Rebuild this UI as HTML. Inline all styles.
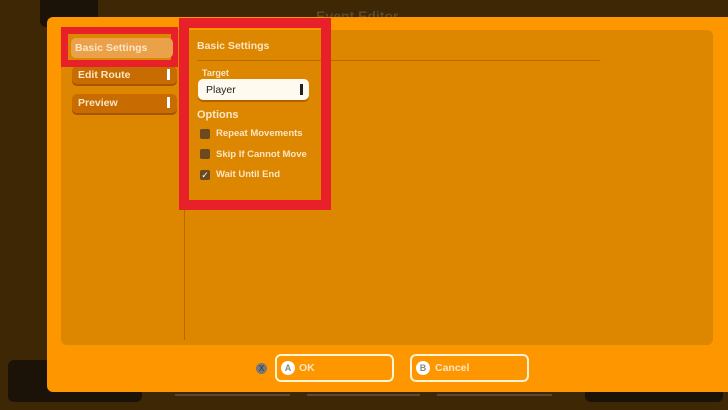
<!DOCTYPE html>
<html><head><style>
*{margin:0;padding:0;box-sizing:border-box}
body{width:728px;height:410px;overflow:hidden;background:#3d2704;font-family:"Liberation Sans",sans-serif;position:relative}
.a{position:absolute}
.t{color:#fbe6c4;font-weight:bold;font-size:10.5px}
.btn{border-radius:5px;background:#c86b00;box-shadow:0 2px 0 #a55400}
.cb{width:10px;height:10px;border-radius:2px;background:#6b4a1e}
.ob{border:2px solid #fff3d6;border-radius:6px;height:28px;width:119px}
.circ{width:14px;height:14px;border-radius:50%;background:#fff;color:#888;font-size:9px;font-weight:bold;text-align:center;line-height:14px}
</style></head><body>
<div class="a" style="left:40px;top:-5px;width:58px;height:32px;background:#1b1307;border-radius:6px"></div>
<div class="a" style="left:8px;top:360px;width:134px;height:42px;background:#1b1307;border-radius:6px"></div>
<div class="a" style="left:585px;top:370px;width:138px;height:32px;background:#1b1307;border-radius:6px"></div>
<div class="a" style="left:175px;top:394px;width:115px;height:2px;background:#5a4a35"></div>
<div class="a" style="left:307px;top:394px;width:113px;height:2px;background:#5a4a35"></div>
<div class="a" style="left:437px;top:394px;width:115px;height:2px;background:#5a4a35"></div>
<div class="a" style="left:316px;top:8px;color:#5a4a30;font-weight:bold;font-size:14px">Event Editor</div>
<div class="a" style="left:47px;top:17px;width:690px;height:375px;background:#fe9600;border-radius:6px"></div>
<div class="a" style="left:61px;top:30px;width:652px;height:315px;background:#dd8600;border-radius:6px"></div>
<div class="a" style="left:184px;top:200px;width:1px;height:140px;background:#b86a00"></div>
<div class="a" style="left:197px;top:60px;width:403px;height:1px;background:#b86a00"></div>
<div class="a btn" style="left:72px;top:66px;width:105px;height:18px"></div>
<div class="a t" style="left:78px;top:69px">Edit Route</div>
<div class="a" style="left:167px;top:69px;width:3px;height:11px;background:#fff"></div>
<div class="a btn" style="left:72px;top:94px;width:105px;height:19px"></div>
<div class="a t" style="left:78px;top:97px">Preview</div>
<div class="a" style="left:167px;top:97px;width:3px;height:11px;background:#fff"></div>
<div class="a" style="left:61px;top:27px;width:117px;height:40px;border:7px solid #e8202a"></div>
<div class="a" style="left:71px;top:38px;width:102px;height:20px;background:#eba14a;border-radius:5px"></div>
<div class="a t" style="left:75px;top:42px">Basic Settings</div>
<div class="a" style="left:179px;top:18px;width:152px;height:192px;border:10px solid #e8202a"></div>
<div class="a t" style="left:197px;top:40px">Basic Settings</div>
<div class="a t" style="left:202px;top:68px;font-size:9px">Target</div>
<div class="a" style="left:198px;top:79px;width:111px;height:21px;background:#fffaf0;border-radius:5px;box-shadow:0 2px 0 #b06000"></div>
<div class="a" style="left:206px;top:84px;font-size:10.5px;color:#222">Player</div>
<div class="a" style="left:300px;top:84px;width:3px;height:11px;background:#222"></div>
<div class="a t" style="left:197px;top:109px;font-size:11px">Options</div>
<div class="a cb" style="left:200px;top:129px"></div>
<div class="a t" style="left:216px;top:128px;font-size:9.5px">Repeat Movements</div>
<div class="a cb" style="left:200px;top:149px"></div>
<div class="a t" style="left:216px;top:149px;font-size:9.5px">Skip If Cannot Move</div>
<div class="a cb" style="left:200px;top:170px;color:#fff;font-size:9px;line-height:10px;text-align:center">✓</div>
<div class="a t" style="left:216px;top:169px;font-size:9.5px">Wait Until End</div>
<div class="a" style="left:256px;top:363px;width:11px;height:11px;border-radius:50%;background:#777;color:#333;font-size:8px;text-align:center;line-height:11px">X</div>
<div class="a ob" style="left:275px;top:354px"></div>
<div class="a circ" style="left:281px;top:361px">A</div>
<div class="a t" style="left:299px;top:362px">OK</div>
<div class="a ob" style="left:410px;top:354px"></div>
<div class="a circ" style="left:416px;top:361px">B</div>
<div class="a t" style="left:435px;top:362px">Cancel</div>
</body></html>
